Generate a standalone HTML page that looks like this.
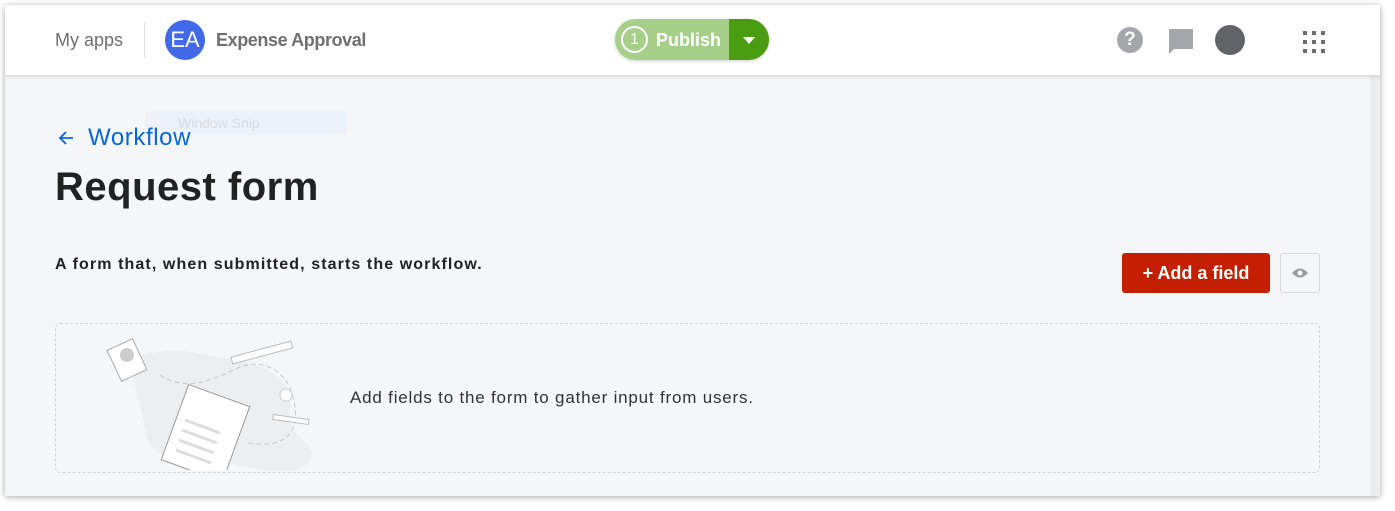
<!DOCTYPE html>
<html><head><style>
body{margin:0;width:1395px;height:511px;background:#fff;position:relative;overflow:hidden;font-family:"Liberation Sans",sans-serif}
.frame{position:absolute;left:5px;top:5px;width:1375px;height:491px;background:#f5f6f8;box-shadow:0 1px 6px rgba(0,0,0,.35);overflow:hidden}
.hdr{position:absolute;left:0;top:0;width:1375px;height:70px;background:#fff;box-shadow:0 2px 4px rgba(0,0,0,.12)}
.abs{position:absolute}
.scroll{position:absolute;right:0;top:70px;width:10px;height:421px;background:#eceef0}
</style></head><body>
<div class="frame">
<div class="scroll"></div>
<div class="hdr">
 <div class="abs" style="left:50px;top:25px;font-size:18px;color:#707070">My apps</div>
 <div class="abs" style="left:139px;top:17px;width:1px;height:36px;background:#ddd"></div>
 <div class="abs" style="left:160px;top:15px;width:40px;height:40px;border-radius:50%;background:#4169e8;color:#fff;font-size:22px;line-height:40px;text-align:center">EA</div>
 <div class="abs" style="left:211px;top:25px;font-size:18px;font-weight:bold;color:#707070;letter-spacing:-0.4px">Expense Approval</div>
 <div class="abs" style="left:610px;top:14px;width:154px;height:41px;border-radius:21px;background:#a6d08a;overflow:hidden;box-shadow:0 1px 3px rgba(0,0,0,.2)">
  <div class="abs" style="left:6px;top:7px;width:23px;height:23px;border:2.5px solid #fff;border-radius:50%;color:#fff;font-size:16px;line-height:23px;text-align:center">1</div>
  <div class="abs" style="left:41px;top:11px;color:#fff;font-weight:bold;font-size:18px">Publish</div>
  <div class="abs" style="left:114px;top:0;width:40px;height:41px;background:#4a9d10"></div>
  <div class="abs" style="left:128px;top:18px;width:0;height:0;border-left:6px solid transparent;border-right:6px solid transparent;border-top:7px solid #fff"></div>
 </div>
 <div class="abs" style="left:1112px;top:22px;width:26px;height:26px;border-radius:50%;background:#a5a6a9;color:#fff;font-weight:bold;font-size:19px;line-height:26px;text-align:center">?</div>
 <svg class="abs" style="left:1162px;top:22px" width="28" height="28"><path d="M2 2h24v20H7l-5 5z" fill="#a5a6a9"/></svg>
 <div class="abs" style="left:1210px;top:20px;width:30px;height:30px;border-radius:50%;background:#616366"></div>
 <svg class="abs" style="left:1296px;top:23px" width="26" height="26" fill="#6b6d70"><rect x="2" y="3" width="4" height="4"/><rect x="11" y="3" width="4" height="4"/><rect x="20" y="3" width="4" height="4"/><rect x="2" y="12" width="4" height="4"/><rect x="11" y="12" width="4" height="4"/><rect x="20" y="12" width="4" height="4"/><rect x="2" y="21" width="4" height="4"/><rect x="11" y="21" width="4" height="4"/><rect x="20" y="21" width="4" height="4"/></svg>
</div>
<div class="abs" style="left:140px;top:106px;width:202px;height:24px;background:#edf2fa;color:#d5dbe4;font-size:14px;line-height:24px;padding-left:33px;box-sizing:border-box">Window Snip</div>
<svg class="abs" style="left:52px;top:124px" width="18" height="18"><path d="M16 9H3M9 3L3 9l6 6" fill="none" stroke="#0a65d8" stroke-width="1.8"/></svg>
<div class="abs" style="left:83px;top:119px;color:#0a65d8;font-size:24px;letter-spacing:0.6px">Workflow</div>
<div class="abs" style="left:50px;top:160px;color:#222;font-size:40px;font-weight:bold;letter-spacing:0.5px">Request form</div>
<div class="abs" style="left:50px;top:251px;color:#222;font-size:16px;font-weight:bold;letter-spacing:1.1px">A form that, when submitted, starts the workflow.</div>
<div class="abs" style="left:1117px;top:248px;width:148px;height:40px;background:#c41f00;border-radius:3px;color:#fff;font-size:18px;font-weight:bold;line-height:40px;text-align:center">+ Add a field</div>
<div class="abs" style="left:1275px;top:248px;width:38px;height:38px;border:1px solid #d6d8db;border-radius:3px;background:#f5f6f8"><svg width="38" height="38"><path d="M11 19q8-9 16 0q-8 9-16 0z" fill="#9a9ca0"/><circle cx="19" cy="19" r="2.5" fill="#f5f6f8"/></svg></div>
<div class="abs" style="left:50px;top:318px;width:1263px;height:148px;border:1px dashed #cfd1d4;border-radius:5px"></div>
<svg class="abs" style="left:100px;top:330px" width="215" height="135">
 <path d="M40 20c30-10 60 0 90 5s60 20 55 50 30 30 20 50-60 10-90 0-70 10-75-30 -25-70 0-75z" fill="#eceef0"/>
 <path d="M55 40c30 20 60 0 80-8s50 0 55 40-30 40-50 35" fill="none" stroke="#c8c8c8" stroke-dasharray="5 3"/>
 <rect x="8" y="8" width="28" height="34" fill="#fff" stroke="#aaa" transform="rotate(-25 22 25)"/><circle cx="22" cy="20" r="7" fill="#ccc"/>
 <rect x="126" y="14" width="62" height="7" fill="#fff" stroke="#bbb" transform="rotate(-15 157 18)"/>
 <rect x="168" y="82" width="36" height="5" fill="#fff" stroke="#bbb" transform="rotate(8 186 84)"/>
 <circle cx="181" cy="60" r="6" fill="#fff" stroke="#ccc"/>
 <rect x="68" y="58" width="65" height="80" fill="#fff" stroke="#999" transform="rotate(20 100 98)"/>
 <g stroke="#ddd" stroke-width="3"><line x1="80" y1="85" x2="115" y2="98"/><line x1="77" y1="95" x2="112" y2="108"/><line x1="74" y1="105" x2="109" y2="118"/><line x1="71" y1="115" x2="106" y2="128"/></g>
</svg>
<div class="abs" style="left:345px;top:383px;color:#333;font-size:17px;letter-spacing:0.8px">Add fields to the form to gather input from users.</div>
</div>
</body></html>
